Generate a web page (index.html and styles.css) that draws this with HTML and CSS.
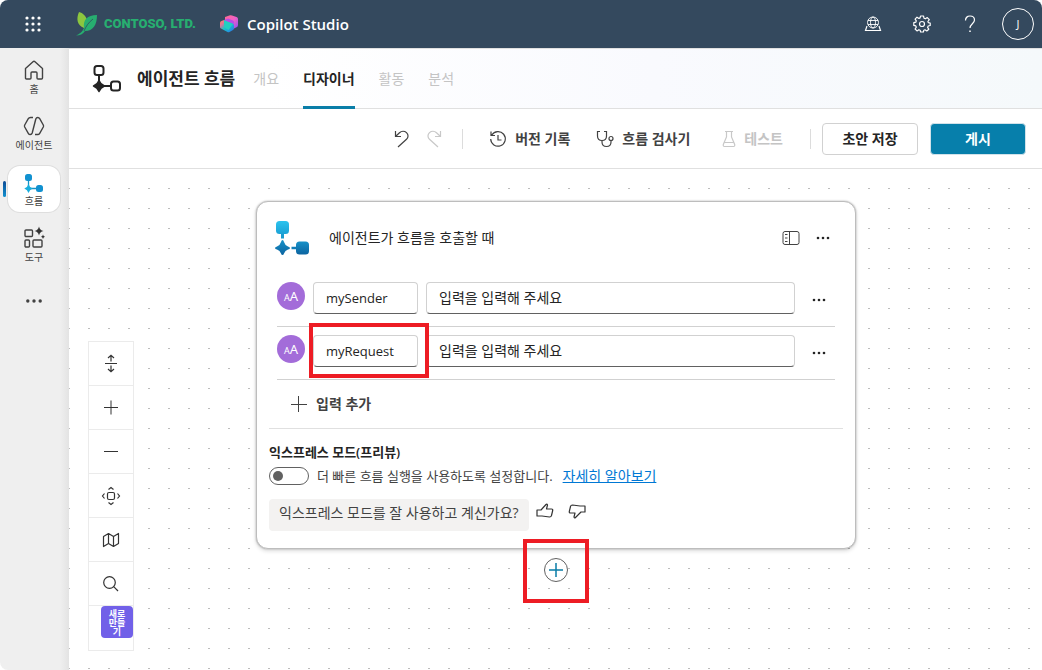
FILE: index.html
```html
<!DOCTYPE html>
<html lang="ko">
<head>
    <meta charset="UTF-8">
    <meta name="viewport" content="width=device-width, initial-scale=1.0">
    <title>Copilot Studio</title>
    <link rel="stylesheet" href="styles.css">
</head>
<body>
    <header class="topbar">
        <button class="icon-btn waffle" aria-label="앱 시작 관리자">
            <svg width="16" height="16" viewBox="0 0 16 16" fill="#fff">
                <circle cx="2" cy="2" r="1.6"/><circle cx="8" cy="2" r="1.6"/><circle cx="14" cy="2" r="1.6"/>
                <circle cx="2" cy="8" r="1.6"/><circle cx="8" cy="8" r="1.6"/><circle cx="14" cy="8" r="1.6"/>
                <circle cx="2" cy="14" r="1.6"/><circle cx="8" cy="14" r="1.6"/><circle cx="14" cy="14" r="1.6"/>
            </svg>
        </button>
        <a class="company" href="#">
            <svg width="22" height="26" viewBox="0 0 22 26">
                <path d="M3 1C0 8 1 14 8 17C8 14 9 11 11 9C10 5 7 2 3 1Z" fill="#8cc63f"/>
                <path d="M21 4C11 4 7 9 8 17L7 19C5 22 3 23 0 24.500C4 24.500 7 23 9 20C17 20 21 14 21 4Z" fill="#27ae70"/>
                <path d="M17 8C13 11 10 15 8 20" fill="none" stroke="#34495e" stroke-width=".8"/>
            </svg>
            <span>CONTOSO, LTD.</span>
        </a>
        <a class="product" href="#">
            <svg width="18" height="18" viewBox="0 0 18 18">
                <defs>
                    <linearGradient id="cubeBack" x1="0" y1="0" x2="1" y2="1">
                        <stop offset="0" stop-color="#ff6a8b"/><stop offset=".5" stop-color="#f060c8"/><stop offset="1" stop-color="#8a4df5"/>
                    </linearGradient>
                    <linearGradient id="cubeFront" x1="0" y1="0" x2="1" y2="1">
                        <stop offset="0" stop-color="#ff8a5d"/><stop offset=".25" stop-color="#e0709a"/><stop offset=".5" stop-color="#15c8c8"/><stop offset="1" stop-color="#2f6df0"/>
                    </linearGradient>
                </defs>
                <path d="M5 2L10 .3Q11 0 12 .4L16.500 2Q18 2.500 18 4V10Q18 11.500 17 12L13 14L5 10Z" fill="url(#cubeBack)"/>
                <path d="M4 5L8 3.500L13 5.500Q14 6 14 7V12L9 14L4 9Z" fill="#b84be8"/>
                <path d="M0 8Q0 6.500 1.500 6L4 5V9L8.500 7L12.500 8.500Q14 9 14 10.500V13Q14 14.500 13 15L9.500 17Q8.500 17.500 7.500 17L1 13.500Q0 13 0 12Z" fill="url(#cubeFront)"/>
                <path d="M4 5V12L8.500 15L13 9L8.500 7Z" fill="#22cfc0"/>
            </svg>
            <span>Copilot Studio</span>
        </a>
        <div class="top-actions">
            <button class="icon-btn" aria-label="환경">
                <svg width="18" height="18" viewBox="0 0 18 18" fill="none" stroke="#fff" stroke-width=".9">
                    <circle cx="8" cy="7.500" r="5.500"/>
                    <path d="M3 5.500H13M3 9.500H13"/>
                    <ellipse cx="8" cy="7.500" rx="2.500" ry="5.500"/>
                    <path d="M2 11L.5 15.500H15.500L14 11" stroke-width="1.200"/>
                </svg>
            </button>
            <button class="icon-btn" aria-label="설정">
                <svg width="18" height="18" viewBox="0 0 18 18" fill="none" stroke="#fff" stroke-width="1.200" stroke-linejoin="round">
                    <path d="M7.500 1H10.500L11 3.200L12.400 3.800L14.300 2.600L16.300 4.600L14.900 6.500L15.300 7.600L17.200 8V10.500L15.200 11L14.600 12.400L15.800 14.200L13.800 16L12 14.800L10.800 15.200L10.400 17H7.600L7.100 15.200L5.900 14.700L4 15.900L2.100 14L3.300 12.200L2.800 10.900L.8 10.400V7.700L2.800 7.200L3.300 5.900L2.100 4.100L4 2.200L5.900 3.400L7.100 2.900Z"/>
                    <circle cx="9" cy="9" r="2.500"/>
                </svg>
            </button>
            <button class="icon-btn" aria-label="도움말">
                <svg width="12" height="18" viewBox="0 0 12 18" fill="none" stroke="#fff" stroke-width="1.200">
                    <path d="M1.500 5.500C1.500 2.700 3.500 1 6 1C8.700 1 10.500 2.700 10.500 5C10.500 8.500 6 9 6 13"/>
                    <path d="M6 15.500V17" stroke-width="1.500"/>
                </svg>
            </button>
            <button class="avatar" aria-label="계정">J</button>
        </div>
    </header>

    <div class="shell">
        <nav class="sidebar">
            <a class="nav-item" href="#">
                <svg width="22" height="22" viewBox="0 0 22 22" fill="none" stroke="#424242" stroke-width="1.400" stroke-linejoin="round">
                    <path d="M2.500 8.500L10 1.700Q11 .8 12 1.700L19.500 8.500V18Q19.500 19 18.500 19H15Q14 19 14 18V13Q14 12 13 12H9Q8 12 8 13V18Q8 19 7 19H3.500Q2.500 19 2.500 18Z"/>
                </svg>
                <span>홈</span>
            </a>
            <a class="nav-item" href="#">
                <svg width="22" height="22" viewBox="0 0 22 22" fill="none" stroke="#424242" stroke-width="1.400" stroke-linejoin="round">
                    <path d="M10 1.500H7.500Q6 1.500 5.300 2.700L1.700 9Q1.200 10 1.700 11L5.300 17.300Q6 18.500 7.200 18.500Q8.700 18.500 9.200 17L12.800 3Q13.300 1.500 14.800 1.500Q16 1.500 16.700 2.700L20.300 9Q20.800 10 20.300 11L16.700 17.300Q16 18.500 14.500 18.500H12"/>
                </svg>
                <span>에이전트</span>
            </a>
            <a class="nav-item active" href="#">
                <svg width="22" height="22" viewBox="0 0 22 22">
                    <path d="M5.500 6V14M6 16.500H14" stroke="#1593c4" stroke-width="1.300"/>
                    <rect x="2" y="2" width="7" height="7" rx="2.500" fill="#1191d0"/>
                    <rect x="13" y="13" width="7" height="7" rx="2.500" fill="#1191d0"/>
                    <path d="M5.500 12Q6.500 15.500 9.700 16.500Q6.500 17.500 5.500 21Q4.500 17.500 1.300 16.500Q4.500 15.500 5.500 12Z" fill="#19aedd"/>
                </svg>
                <span>흐름</span>
            </a>
            <a class="nav-item" href="#">
                <svg width="22" height="22" viewBox="0 0 22 22" fill="none" stroke="#424242" stroke-width="1.400">
                    <rect x="2" y="2" width="7.500" height="6.500" rx="1"/>
                    <rect x="2" y="12" width="4.500" height="7" rx="1"/>
                    <rect x="10" y="12" width="9" height="7" rx="1"/>
                    <path d="M16 -1.500Q16.800 2.300 20.500 3Q16.800 3.700 16 7.500Q15.200 3.700 11.500 3Q15.200 2.300 16 -1.500ZM20 6.500Q20.300 8.500 22 8.800Q20.300 9.100 20 11Q19.700 9.100 18 8.800Q19.700 8.500 20 6.500Z" fill="#333" stroke="none"/>
                </svg>
                <span>도구</span>
            </a>
            <button class="nav-item nav-more" aria-label="더 보기">
                <svg width="16" height="4" viewBox="0 0 16 4" fill="#424242">
                    <circle cx="1.800" cy="2" r="1.700"/><circle cx="8" cy="2" r="1.700"/><circle cx="14.200" cy="2" r="1.700"/>
                </svg>
            </button>
        </nav>

        <main class="main">
            <div class="page-head">
                <svg width="30" height="30" viewBox="0 0 30 30">
                    <path d="M7 11V17M12 22H19" stroke="#242424" stroke-width="2"/>
                    <rect x="2.500" y="2" width="9" height="9" rx="2.500" fill="#fff" stroke="#242424" stroke-width="2"/>
                    <rect x="19" y="17.500" width="9" height="9" rx="2.500" fill="#fff" stroke="#242424" stroke-width="2"/>
                    <path d="M7 16.500Q8.500 20.500 12.500 22Q8.500 23.500 7 27.500Q5.500 23.500 1.500 22Q5.500 20.500 7 16.500Z" fill="#242424" stroke="#242424" stroke-width="1.500" stroke-linejoin="round"/>
                </svg>
                <h1>에이전트 흐름</h1>
                <div class="tabs" role="tablist">
                    <button class="tab" role="tab" disabled>개요</button>
                    <button class="tab selected" role="tab" aria-selected="true">디자이너</button>
                    <button class="tab" role="tab" disabled>활동</button>
                    <button class="tab" role="tab" disabled>분석</button>
                </div>
            </div>

            <div class="toolbar">
                <button class="history-btn" aria-label="실행 취소">
                    <svg width="16" height="18" viewBox="0 0 16 18" fill="none" stroke="#424242" stroke-width="1.200">
                        <path d="M1.500 1V6.500H7M1.500 6.500L5.500 2.700C7.500 .8 10.500 .8 12.500 2.600C14.600 4.600 14.500 7.300 12.500 9.300L4 17"/>
                    </svg>
                </button>
                <button class="history-btn" aria-label="다시 실행" disabled>
                    <svg width="16" height="18" viewBox="0 0 16 18" fill="none" stroke="#c8c8c8" stroke-width="1.200">
                        <path d="M14.500 1V6.500H9M14.500 6.500L10.500 2.700C8.500 .8 5.500 .8 3.500 2.600C1.400 4.600 1.500 7.300 3.500 9.300L12 17"/>
                    </svg>
                </button>
                <span class="sep sep-first"></span>
                <button class="tool">
                    <svg width="18" height="18" viewBox="0 0 18 18" fill="none" stroke="#424242" stroke-width="1.200">
                        <path d="M2.800 5A7.300 7.300 0 1 1 1.700 9M2 1.500V5.500H6M9 5V10H12.500"/>
                    </svg>
                    버전 기록
                </button>
                <button class="tool">
                    <svg width="18" height="18" viewBox="0 0 18 18" fill="none" stroke="#424242" stroke-width="1.200">
                        <path d="M4 1.500H1.500V6C1.500 9 3.500 10.500 6 10.500C8.500 10.500 10.500 9 10.500 6V1.500H8M6 10.500V12C6 15 8 16.500 10.500 16.500C13.500 16.500 15 15 15 12V10.500"/>
                        <circle cx="15" cy="8.500" r="2"/>
                    </svg>
                    흐름 검사기
                </button>
                <button class="tool tool-test" disabled>
                    <svg width="14" height="18" viewBox="0 0 14 18" fill="none" stroke="#c8c8c8" stroke-width="1.200">
                        <path d="M3 1.500H11M4.500 1.500V7L1.300 14.500Q1 16.500 2.500 16.500H11.500Q13 16.500 12.700 14.500L9.500 7V1.500M2.500 12.500H11.500"/>
                    </svg>
                    테스트
                </button>
                <span class="sep"></span>
                <button class="btn">초안 저장</button>
                <button class="btn primary">게시</button>
            </div>

            <div class="canvas">
                <section class="card">
                    <div class="card-head">
                        <svg width="34" height="34" viewBox="0 0 34 34">
                            <defs>
                                <linearGradient id="flowTop" x1="0" y1="0" x2="0" y2="1">
                                    <stop offset="0" stop-color="#2cc3ee"/><stop offset="1" stop-color="#1ba2d6"/>
                                </linearGradient>
                                <linearGradient id="flowBottom" x1="0" y1="0" x2="0" y2="1">
                                    <stop offset="0" stop-color="#1791c8"/><stop offset="1" stop-color="#0c64a0"/>
                                </linearGradient>
                            </defs>
                            <path d="M7.500 12V17.500" stroke="#1b9ccf" stroke-width="3"/>
                            <path d="M16.500 27H23" stroke="#117eb8" stroke-width="2.500"/>
                            <rect x="1" y="0" width="13" height="13" rx="3.500" fill="url(#flowTop)"/>
                            <rect x="21" y="20.500" width="13" height="13" rx="3.500" fill="url(#flowBottom)"/>
                            <path d="M7.500 19Q8.500 19 9 21Q10 24.500 13 25.500Q15 26 15 27Q15 28 13 28.500Q10 29.500 9 32.500Q8.500 34 7.500 34Q6.500 34 6 32.500Q5 29.500 2 28.500Q0 28 0 27Q0 26 2 25.500Q5 24.500 6 21Q6.500 19 7.500 19Z" fill="url(#flowBottom)"/>
                        </svg>
                        <h2>에이전트가 흐름을 호출할 때</h2>
                        <button class="more-btn" aria-label="패널 열기">
                            <svg width="18" height="16" viewBox="0 0 18 16" fill="none" stroke="#424242">
                                <rect x="1" y="1.500" width="16" height="13" rx="2"/>
                                <path d="M7.500 1.500V14.500M3 4.500H5.500M3 8H5.500M3 11.500H5.500"/>
                            </svg>
                        </button>
                        <button class="more-btn" aria-label="메뉴">
                            <svg width="14" height="4" viewBox="0 0 14 4" fill="#242424">
                                <circle cx="2" cy="2" r="1.300"/><circle cx="7" cy="2" r="1.300"/><circle cx="12" cy="2" r="1.300"/>
                            </svg>
                        </button>
                    </div>

                    <div class="params">
                        <div class="param">
                            <span class="type"><small>A</small>A</span>
                            <input class="param-name" type="text" value="mySender" aria-label="입력 이름">
                            <input class="param-value" type="text" value="입력을 입력해 주세요" aria-label="설명">
                            <button class="more-btn" aria-label="mySender 메뉴">
                                <svg width="14" height="4" viewBox="0 0 14 4" fill="#242424">
                                    <circle cx="2" cy="2" r="1.300"/><circle cx="7" cy="2" r="1.300"/><circle cx="12" cy="2" r="1.300"/>
                                </svg>
                            </button>
                        </div>
                        <div class="param">
                            <span class="type"><small>A</small>A</span>
                            <div class="name-wrap">
                                <input class="param-name" type="text" value="myRequest" aria-label="입력 이름">
                                <span class="callout callout-name"></span>
                            </div>
                            <input class="param-value" type="text" value="입력을 입력해 주세요" aria-label="설명">
                            <button class="more-btn" aria-label="myRequest 메뉴">
                                <svg width="14" height="4" viewBox="0 0 14 4" fill="#242424">
                                    <circle cx="2" cy="2" r="1.300"/><circle cx="7" cy="2" r="1.300"/><circle cx="12" cy="2" r="1.300"/>
                                </svg>
                            </button>
                        </div>
                    </div>

                    <div class="add-row">
                        <button class="add-input">
                            <svg width="16" height="16" viewBox="0 0 16 16" stroke="#424242"><path d="M0 8.500H16M7.500 0V16"/></svg>
                            입력 추가
                        </button>
                    </div>

                    <h3>익스프레스 모드(프리뷰)</h3>
                    <div class="express">
                        <input class="toggle" type="checkbox" role="switch" id="express">
                        <label for="express">더 빠른 흐름 실행을 사용하도록 설정합니다.</label>
                        <a href="#">자세히 알아보기</a>
                    </div>
                    <div class="feedback">
                        <p>익스프레스 모드를 잘 사용하고 계신가요?</p>
                        <button class="thumb" aria-label="좋아요">
                            <svg width="18" height="16" viewBox="0 0 18 16" fill="none" stroke="#333" stroke-width="1.200" stroke-linejoin="round">
                                <path d="M1 7H5L10 1.500Q11 .5 11.500 2L10.500 6H15.500Q17 6 16.700 7.500L15.500 12.500Q15.200 14 13.500 14L6 13H1Z"/>
                            </svg>
                        </button>
                        <button class="thumb" aria-label="싫어요">
                            <svg width="18" height="16" viewBox="0 0 18 16" fill="none" stroke="#333" stroke-width="1.200" stroke-linejoin="round">
                                <path d="M17 3V9H13L7.500 14.500Q6.500 15.500 6 14L7 10H2.500Q1 10 1.300 8.500L2.500 3.500Q2.800 2 4.500 2L12 3Z"/>
                            </svg>
                        </button>
                    </div>
                </section>

                <div class="insert">
                    <button class="insert-btn" aria-label="작업 추가">
                        <svg width="14" height="14" viewBox="0 0 14 14" stroke="#0a7ea8" stroke-width="1.500"><path d="M0 7H14M7 0V14"/></svg>
                    </button>
                    <span class="callout callout-insert"></span>
                </div>

                <div class="map-tools">
                    <button aria-label="모두 확장">
                        <svg width="18" height="18" viewBox="0 0 18 18" fill="none" stroke="#333" stroke-width="1.200">
                            <path d="M3 8.500H15M9 0V6.500M6 3L9 .3L12 3M9 10.500V17M6 14L9 16.700L12 14"/>
                        </svg>
                    </button>
                    <button aria-label="확대">
                        <svg width="18" height="18" viewBox="0 0 18 18" stroke="#333"><path d="M2 8.500H16M9 1.500V15.500"/></svg>
                    </button>
                    <button aria-label="축소">
                        <svg width="18" height="18" viewBox="0 0 18 18" stroke="#333"><path d="M2 8.500H16"/></svg>
                    </button>
                    <button aria-label="화면에 맞춤">
                        <svg width="18" height="18" viewBox="0 0 18 18" fill="none" stroke="#333" stroke-width="1.200">
                            <rect x="5.500" y="5.500" width="7" height="7" rx="1.500"/>
                            <path d="M6.500 2.500L9 .5L11.500 2.500M6.500 15.500L9 17.500L11.500 15.500M2.500 6.500L.5 9L2.500 11.500M15.500 6.500L17.500 9L15.500 11.500"/>
                        </svg>
                    </button>
                    <button aria-label="미니맵">
                        <svg width="18" height="18" viewBox="0 0 18 18" fill="none" stroke="#333" stroke-width="1.200" stroke-linejoin="round">
                            <path d="M1.500 5.500L6.500 2.500L11.500 5.500L16.500 2.500V12.500L11.500 15.500L6.500 12.500L1.500 15.500ZM6.500 2.500V12.500M11.500 5.500V15.500"/>
                        </svg>
                    </button>
                    <button aria-label="검색">
                        <svg width="18" height="18" viewBox="0 0 18 18" fill="none" stroke="#333" stroke-width="1.200">
                            <circle cx="7.500" cy="7.500" r="5.800"/><path d="M11.700 11.700L16 16"/>
                        </svg>
                    </button>
                    <div class="new-slot">
                        <button class="new-btn">새로 만들기</button>
                    </div>
                </div>
            </div>
        </main>
    </div>
</body>
</html>
```

FILE: styles.css
```css
* {
    box-sizing: border-box;
}
body {
    margin: 0;
    min-height: 100vh;
    display: flex;
    flex-direction: column;
    background: #fff;
    color: #242424;
    font-family: "Open Sans", "Noto Sans CJK KR", sans-serif;
    font-size: 14px;
    line-height: 20px;
}
button, input {
    font: inherit;
    color: inherit;
}
button {
    display: flex;
    align-items: center;
    justify-content: center;
    padding: 0;
    border: 0;
    background: none;
}
svg {
    display: block;
    flex: none;
    overflow: visible;
}
a {
    text-decoration: none;
}
h1, h2, h3, p {
    margin: 0;
}

/* top bar */
.topbar {
    display: flex;
    align-items: center;
    height: 48px;
    padding: 0 8px 0 17px;
    background: #34495e;
    border-radius: 8px 8px 0 0;
    color: #fff;
}
.icon-btn {
    width: 32px;
    height: 32px;
}
.company {
    display: flex;
    align-items: center;
    gap: 6px;
    margin-left: 27px;
    color: #27ae70;
    font-family: Roboto, sans-serif;
    font-size: 13px;
    font-weight: 900;
}
.product {
    display: flex;
    align-items: center;
    gap: 9px;
    margin-left: 24px;
    color: #fff;
    font-size: 15px;
    font-weight: 600;
}
.top-actions {
    display: flex;
    align-items: center;
    gap: 16px;
    margin-left: auto;
}
.avatar {
    width: 32px;
    height: 32px;
    border: 1px solid #fff;
    border-radius: 50%;
    font-size: 11px;
}

/* sidebar */
.shell {
    flex: 1;
    display: flex;
}
.sidebar {
    display: flex;
    flex-direction: column;
    gap: 10px;
    width: 69px;
    padding: 6px 8px;
    border-bottom-left-radius: 8px;
    background: linear-gradient(90deg, #efefef 60px, #e3e3e3);
}
.nav-item {
    position: relative;
    display: flex;
    flex-direction: column;
    align-items: center;
    width: 52px;
    height: 46px;
    padding-top: 6px;
    border-radius: 12px;
    color: #424242;
    font-size: 10px;
    line-height: 14px;
}
.nav-item.active {
    background: #fff;
    box-shadow: 0 0 0 1px #dedede;
}
.nav-item.active::before {
    content: "";
    position: absolute;
    top: 15px;
    left: -5px;
    width: 3px;
    height: 16px;
    border-radius: 2px;
    background: linear-gradient(#0c4a94, #1191d0);
}
.nav-more {
    justify-content: center;
    padding: 0;
}

/* page header */
.main {
    flex: 1;
    display: flex;
    flex-direction: column;
    min-width: 0;
    border-top: 1px solid #e0e0e0;
}
.page-head {
    display: flex;
    align-items: center;
    height: 60px;
    padding-left: 23px;
    border-bottom: 1px solid #e0e0e0;
    background: linear-gradient(90deg, #fff 20%, #f9fafe 60%, #f5f9fb);
}
.page-head h1 {
    margin-left: 15px;
    font-size: 17px;
    font-weight: 600;
    line-height: 24px;
}
.tabs {
    display: flex;
    align-self: stretch;
    gap: 24px;
    margin: 0 0 -1px 18px;
}
.tab {
    border-top: 3px solid transparent;
    border-bottom: 3px solid transparent;
    color: #c4c4c4;
}
.tab.selected {
    border-bottom-color: #0a7ea8;
    color: #242424;
    font-weight: 600;
}

/* command bar */
.toolbar {
    display: flex;
    align-items: center;
    justify-content: flex-end;
    height: 60px;
    padding-right: 16px;
    border-bottom: 1px solid #e0e0e0;
}
.history-btn {
    width: 32px;
    height: 32px;
}
.tool {
    gap: 8px;
    margin-left: 26px;
    color: #424242;
    font-weight: 600;
}
.tool:disabled {
    color: #c4c4c4;
}
.tool-test {
    margin-left: 32px;
}
.sep {
    width: 1px;
    height: 20px;
    margin: 0 11px 0 27px;
    background: #dcdcdc;
}
.sep-first {
    margin: 0 0 0 12px;
}
.btn {
    width: 96px;
    height: 32px;
    border: 1px solid #d1d1d1;
    border-radius: 4px;
    background: #fff;
    font-weight: 600;
}
.btn.primary {
    margin-left: 12px;
    border-color: #d1e2ea;
    background: #077fab;
    color: #fff;
}

/* designer canvas with dotted grid */
.canvas {
    position: relative;
    flex: 1;
    padding: 32px 15px 32px 16px;
    background-image:
        linear-gradient(transparent 1px, #fff 1px),
        linear-gradient(90deg, #bdbdbd 2px, #fff 2px);
    background-size: 20px 20px;
    background-position: 19px 19px;
}
.card {
    max-width: 600px;
    margin: 0 auto;
    padding: 0 12px 17px;
    border: 1px solid #bdbdbd;
    border-radius: 12px;
    background: #fff;
    box-shadow: 0 0 2px rgba(0, 0, 0, 0.3), 0 2px 4px rgba(0, 0, 0, 0.14);
}
.card-head {
    display: flex;
    align-items: center;
    height: 72px;
    padding: 0 4px 0 6px;
}
.card-head h2 {
    flex: 1;
    margin-left: 20px;
    font-size: 14px;
    font-weight: 400;
}
.more-btn {
    width: 32px;
    height: 36px;
}
.params {
    padding: 0 8px;
}
.param {
    display: flex;
    align-items: flex-start;
    gap: 8px;
    height: 53px;
    padding-top: 8px;
    border-bottom: 1px solid #d1d1d1;
}
.type {
    display: flex;
    align-items: baseline;
    justify-content: center;
    width: 28px;
    height: 28px;
    border-radius: 50%;
    background: #a36cd9;
    color: #fff;
    font-family: "Noto Sans", sans-serif;
    font-size: 13px;
    line-height: 28px;
}
.type small {
    font-size: 9px;
}
.param-name,
.param-value {
    height: 32px;
    padding: 0 12px;
    border: 1px solid #d1d1d1;
    border-bottom-color: #616161;
    border-radius: 4px;
    background: #fff;
}
.param-name {
    display: block;
    width: 105px;
    font-size: 13px;
}
.param-value {
    flex: 1;
    min-width: 0;
    padding-bottom: 2px;
}
.name-wrap {
    position: relative;
}
.callout {
    position: absolute;
    z-index: 1;
    border: 4px solid #ed1c24;
    pointer-events: none;
}
.callout-name {
    top: -12px;
    left: -4px;
    width: 120px;
    height: 55px;
}
.add-row {
    padding: 14px 22px;
    border-bottom: 1px solid #e0e0e0;
}
.add-input {
    gap: 9px;
    color: #424242;
    font-weight: 600;
}
.card h3 {
    margin-top: 14px;
    font-size: 13px;
    font-weight: 600;
    line-height: 18px;
}
.express {
    display: flex;
    align-items: center;
    height: 30px;
    color: #424242;
    font-size: 13px;
}
.toggle {
    appearance: none;
    display: flex;
    align-items: center;
    width: 40px;
    height: 18px;
    margin: 0 8px 0 0;
    padding: 0 3px;
    border: 1px solid #616161;
    border-radius: 9px;
}
.toggle::before {
    content: "";
    width: 10px;
    height: 10px;
    border-radius: 50%;
    background: #616161;
}
.toggle:checked {
    justify-content: flex-end;
}
.express a {
    margin-left: 10px;
    color: #0078d4;
    font-size: 14px;
    text-decoration: underline;
}
.feedback {
    display: flex;
    margin-top: 8px;
}
.feedback p {
    padding: 4px 10px 8px;
    border-radius: 4px;
    background: #f3f2f1;
    color: #424242;
}
.thumb {
    width: 32px;
    height: 24px;
}

/* add-step handle under the card */
.insert {
    position: relative;
    width: 24px;
    margin: 9px auto 0;
}
.insert-btn {
    width: 24px;
    height: 24px;
    border: 1px solid #616161;
    border-radius: 50%;
    background: #fff;
}
.callout-insert {
    top: -19px;
    left: -21px;
    width: 66px;
    height: 64px;
}

/* floating zoom controls */
.map-tools {
    position: absolute;
    left: 19px;
    bottom: 19px;
    width: 46px;
    border: 1px solid #ebebeb;
    background: #fff;
}
.map-tools > button {
    width: 100%;
    height: 44px;
    border-bottom: 1px solid #ebebeb;
}
.new-slot {
    display: flex;
    justify-content: flex-end;
    height: 44px;
}
.map-tools .new-btn {
    width: 32px;
    height: 32px;
    padding: 0 7px;
    border-radius: 4px;
    background: #7160e8;
    color: #fff;
    font-size: 9px;
    font-weight: 700;
    line-height: 9px;
    word-break: break-all;
}
```
